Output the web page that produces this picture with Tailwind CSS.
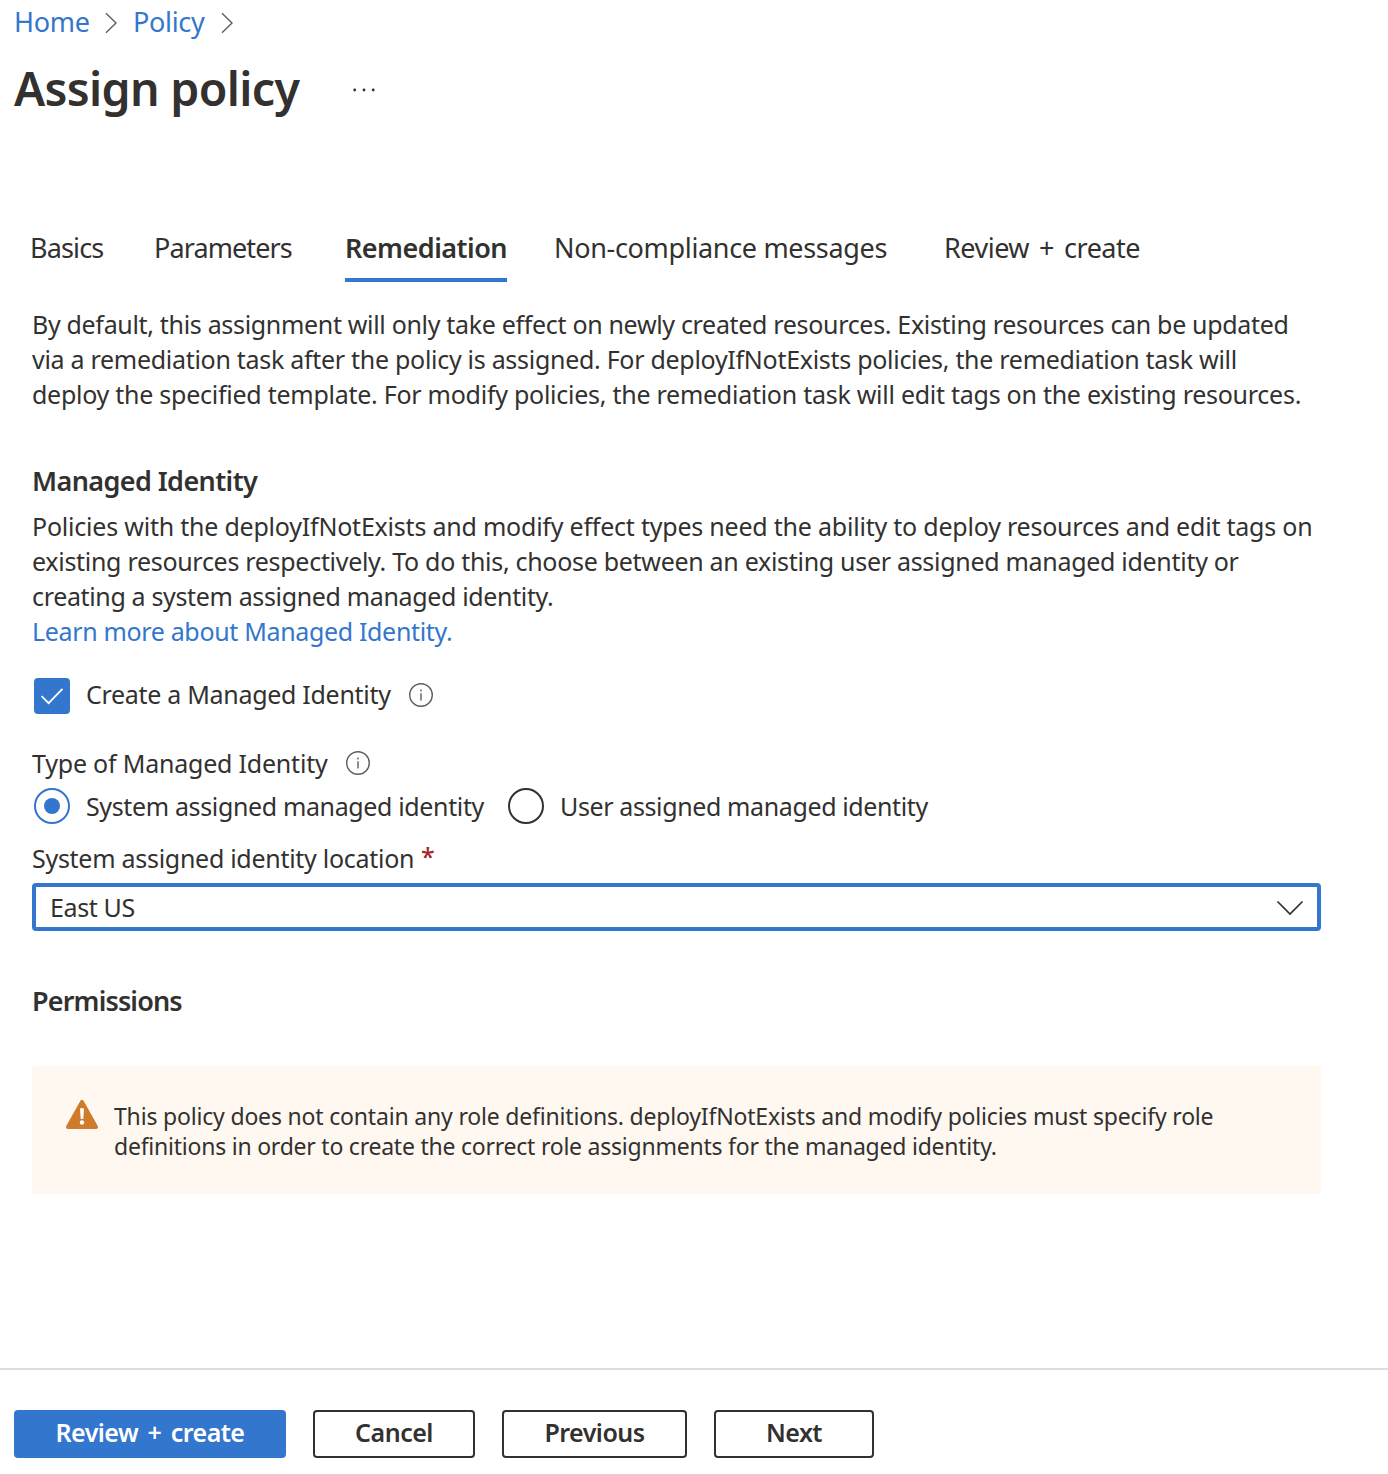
<!DOCTYPE html>
<html lang="en">
<head>
<meta charset="utf-8">
<title>Assign policy</title>
<script src="https://cdn.jsdelivr.net/npm/@tailwindcss/browser@4"></script>
</head>
<body class="bg-white">
<div class="flex h-[1474px] w-[1388px] flex-col overflow-hidden whitespace-nowrap font-['Noto_Sans','Open_Sans',sans-serif] text-[25px] leading-[35px] text-[#323130]">

  <header class="h-[229px] shrink-0 pl-[14px] pt-1">
    <nav class="flex h-9 text-[27px] leading-9 text-[#3376cd]">
      <a class="w-[91px] tracking-[-0.3px]">Home</a>
      <svg class="mt-2 h-[22px] w-[14px]" viewBox="0 0 14 22" fill="none" stroke="#605e5c" stroke-width="1.4"><path d="M1 1.3 11 11 1 20.7"/></svg>
      <a class="ml-[14px] w-[88px] tracking-[-0.33px]">Policy</a>
      <svg class="mt-2 h-[22px] w-[14px]" viewBox="0 0 14 22" fill="none" stroke="#605e5c" stroke-width="1.4"><path d="M1 1.3 11 11 1 20.7"/></svg>
    </nav>
    <div class="mt-4 flex h-16 items-center">
      <h1 class="w-[338px] text-[46.5px] font-semibold leading-[66px] tracking-[-0.68px]">Assign policy</h1>
      <svg class="mt-1 h-1 w-6" viewBox="0 0 24 4" fill="#323130"><circle cx="2.7" cy="2" r="1.4"/><circle cx="12" cy="2" r="1.4"/><circle cx="21.2" cy="2" r="1.4"/></svg>
    </div>
  </header>

  <nav class="flex h-[53px] shrink-0 pl-[30px] text-[27px] leading-[38px]">
    <a class="w-[124px] tracking-[-0.84px]">Basics</a>
    <a class="w-[191px] tracking-[-0.9px]">Parameters</a>
    <a class="h-[53px] w-[162px] border-b-4 border-[#3376cd] font-semibold tracking-[-0.52px]">Remediation</a>
    <a class="ml-[47px] w-[390px] tracking-[-0.33px]">Non-compliance messages</a>
    <a class="tracking-[-0.5px] [word-spacing:3.5px]">Review + create</a>
  </nav>

  <main class="flex w-[1321px] shrink-0 flex-col pl-8">
    <p class="mt-[25px]">
      <span class="block tracking-[-0.323px]">By default, this assignment will only take effect on newly created resources. Existing resources can be updated</span>
      <span class="block tracking-[-0.29px]">via a remediation task after the policy is assigned. For deployIfNotExists policies, the remediation task will</span>
      <span class="block tracking-[-0.262px]">deploy the specified template. For modify policies, the remediation task will edit tags on the existing resources.</span>
    </p>

    <h2 class="mt-[51px] text-[27px] font-semibold leading-9 tracking-[-0.6px]">Managed Identity</h2>
    <p class="mt-[10px]">
      <span class="block tracking-[-0.218px]">Policies with the deployIfNotExists and modify effect types need the ability to deploy resources and edit tags on</span>
      <span class="block tracking-[-0.297px]">existing resources respectively. To do this, choose between an existing user assigned managed identity or</span>
      <span class="block tracking-[-0.35px]">creating a system assigned managed identity.</span>
      <a class="block tracking-[-0.34px] text-[#3376cd]">Learn more about Managed Identity.</a>
    </p>

    <div class="mt-[29px] flex h-9 pl-[2px]">
      <span class="flex size-9 items-center justify-center rounded bg-[#3376cd]">
        <svg class="size-9" viewBox="0 0 36 36" fill="none" stroke="#fff" stroke-width="1.8"><path d="M7.6 18.2 14.6 25.2 28.5 10.8"/></svg>
      </span>
      <span class="ml-4 w-[322px] leading-8 tracking-[-0.3px]">Create a Managed Identity</span>
      <svg class="mt-1 size-[26px]" viewBox="0 0 26 26" fill="none" stroke="#605e5c" stroke-width="1.4"><circle cx="13" cy="13" r="11.3"/><path d="M13 11.2v7.3"/><path d="M13 7.4v2"/></svg>
    </div>

    <div class="mt-[33px] flex h-8 leading-8">
      <span class="w-[313px] tracking-[-0.21px]">Type of Managed Identity</span>
      <svg class="mt-[3px] size-[26px]" viewBox="0 0 26 26" fill="none" stroke="#605e5c" stroke-width="1.4"><circle cx="13" cy="13" r="11.3"/><path d="M13 11.2v7.3"/><path d="M13 7.4v2"/></svg>
    </div>

    <div class="mt-[9px] flex h-9 pl-[2px] leading-9">
      <span class="flex size-9 items-center justify-center rounded-full border-2 border-[#3376cd]"><span class="size-4 rounded-full bg-[#3376cd]"></span></span>
      <span class="ml-4 w-[422px] tracking-[-0.36px]">System assigned managed identity</span>
      <span class="size-9 rounded-full border-2 border-[#323130]"></span>
      <span class="ml-4 tracking-[-0.38px]">User assigned managed identity</span>
    </div>

    <label class="mt-[18px] flex h-8 leading-8"><span class="w-[389px] tracking-[-0.28px]">System assigned identity location</span><span class="leading-7 font-medium text-[#a4262c]">*</span></label>
    <div class="mt-[9px] flex h-12 items-center justify-between rounded border-4 border-[#3376cd] pl-[14px] pr-[13px] leading-10">
      <span class="tracking-[-0.37px]">East US</span>
      <svg class="mt-px h-4 w-7" viewBox="0 0 28 16" fill="none" stroke="#323130" stroke-width="1.7"><path d="M1.5 1.5 14 14 26.5 1.5"/></svg>
    </div>

    <h2 class="mt-[52px] text-[27px] font-semibold leading-9 tracking-[-0.85px]">Permissions</h2>

    <section class="mt-[47px] flex h-32 rounded bg-[#fef8f1] pl-[34px] pt-[34px]">
      <svg class="h-[30px] w-8" viewBox="0 0 32 30"><path d="M16 2 30 27H2Z" fill="#cf7b2c" stroke="#cf7b2c" stroke-width="4" stroke-linejoin="round"/><path d="M14 8.2h4l-.7 10.8h-2.6z" fill="#fff"/><circle cx="16" cy="22.5" r="2.2" fill="#fff"/></svg>
      <p class="ml-4 mt-px text-[23px] leading-[30px]">
        <span class="block tracking-[-0.182px]">This policy does not contain any role definitions. deployIfNotExists and modify policies must specify role</span>
        <span class="block tracking-[-0.23px]">definitions in order to create the correct role assignments for the managed identity.</span>
      </p>
    </section>
  </main>

  <footer class="mt-auto flex h-[106px] shrink-0 border-t-2 border-[#dddddd] pl-[14px] pt-10 text-center font-semibold leading-10">
    <button class="h-12 w-[272px] rounded border-2 border-[#3376cd] bg-[#3376cd] pb-1 tracking-[-0.55px] text-white [word-spacing:3.5px]">Review + create</button>
    <button class="ml-[27px] h-12 w-[162px] rounded border-2 border-[#323130] pb-1 tracking-[-0.5px]">Cancel</button>
    <button class="ml-[27px] h-12 w-[185px] rounded border-2 border-[#323130] pb-1 tracking-[-0.52px]">Previous</button>
    <button class="ml-[27px] h-12 w-[160px] rounded border-2 border-[#323130] pb-1 tracking-[-0.56px]">Next</button>
  </footer>
</div>
</body>
</html>
